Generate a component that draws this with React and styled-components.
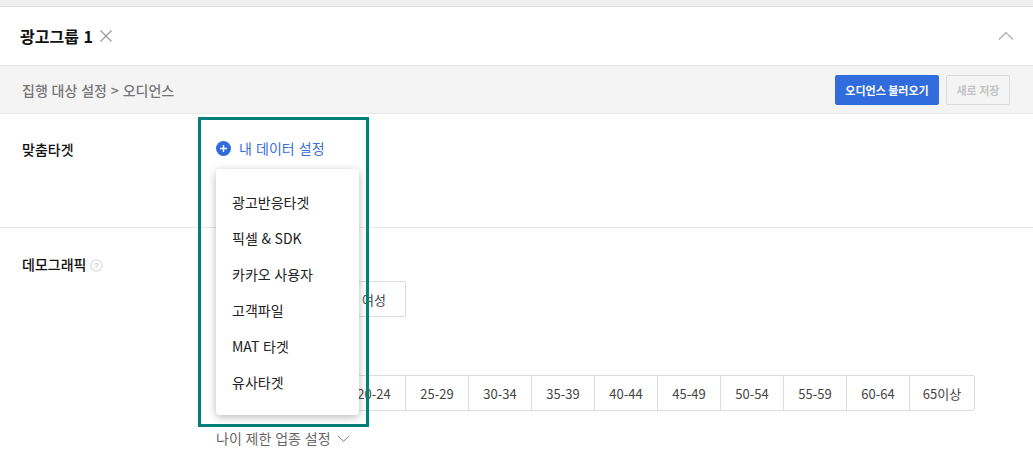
import React from "react";
import styled, { createGlobalStyle } from "styled-components";

const Global = createGlobalStyle`
  html, body { margin: 0; padding: 0; background: #fff; }
  body { font-family: "Noto Sans CJK KR", "Noto Sans", sans-serif; color: #222; }
  #root { height: 459px; overflow: hidden; }
`;

const Page = styled.div`
  position: relative;
  width: 1033px;
  height: 459px;
  overflow: hidden;
`;
const TopStrip = styled.div`
  height: 6px;
  background: #eeeeee;
  border-bottom: 1px solid #dcdcdc;
`;
const GroupHeader = styled.div`
  height: 58px;
  display: flex;
  align-items: center;
  justify-content: space-between;
  padding: 0 19px 0 20px;
  border-bottom: 1px solid #e8e8e8;
`;
const GroupTitle = styled.div`
  display: flex;
  align-items: center;
  gap: 5px;
  font-size: 16px;
  font-weight: 700;
  word-spacing: 1px;
  color: #111;
`;
const SubBar = styled.div`
  height: 47px;
  display: flex;
  align-items: center;
  justify-content: space-between;
  padding: 0 23px 0 22px;
  background: #f4f4f4;
  border-bottom: 1px solid #e8e8e8;
`;
const Crumb = styled.div`
  font-size: 14px;
  font-weight: 500;
  word-spacing: 0.7px;
  color: #777;
`;
const Actions = styled.div`
  display: flex;
  gap: 7px;
`;
const ActionButton = styled.button`
  height: 30px;
  padding: 0;
  width: ${(p) => p.$w}px;
  font: 700 11px "Noto Sans CJK KR", sans-serif;
  border-radius: 2px;
  border: 1px solid ${(p) => (p.$primary ? "#316cdd" : "#dcdcdc")};
  background: ${(p) => (p.$primary ? "#316cdd" : "#f4f4f4")};
  color: ${(p) => (p.$primary ? "#fff" : "#c4c4c4")};
`;
const Row = styled.div`
  display: flex;
  height: ${(p) => p.$h}px;
  border-bottom: ${(p) => (p.$line ? "1px solid #e8e8e8" : "none")};
`;
const RowLabel = styled.div`
  width: 194px;
  padding: ${(p) => p.$top}px 0 0 22px;
  display: flex;
  align-items: flex-start;
  gap: 4px;
  font-size: 14px;
  font-weight: 500;
  line-height: 19px;
  color: #111;
`;
const RowBody = styled.div`
  flex: 1;
  display: flex;
  flex-direction: column;
  align-items: flex-start;
`;
const AddLink = styled.div`
  margin-top: 24px;
  display: flex;
  align-items: center;
  gap: 8px;
  font-size: 14px;
  line-height: 20px;
  word-spacing: 1px;
  color: #3a6fdc;
`;
const Segments = styled.div`
  display: flex;
  height: 36px;
  margin-top: ${(p) => p.$top}px;
  box-sizing: border-box;
  border: 1px solid #dcdcdc;
  border-radius: 2px;
`;
const Segment = styled.div`
  width: 62px;
  display: flex;
  align-items: center;
  justify-content: center;
  font-size: 13px;
  color: #444;
  border-left: 1px solid #dcdcdc;
  &:first-child { border-left: none; }
  &:last-child { width: 64px; }
`;
const GenderSegments = styled(Segments)`
  ${Segment}:last-child { width: 62px; }
`;
const AgeLimit = styled.div`
  margin-top: 17px;
  display: flex;
  align-items: center;
  gap: 6px;
  font-size: 14px;
  line-height: 20px;
  word-spacing: 0.7px;
  color: #666;
`;
const Highlight = styled.div`
  position: absolute;
  left: 198px;
  top: 117px;
  width: 171px;
  height: 310px;
  box-sizing: border-box;
  border: 3px solid #008078;
  pointer-events: none;
`;
const Menu = styled.ul`
  position: absolute;
  left: 216px;
  top: 169px;
  width: 143px;
  height: 246px;
  box-sizing: border-box;
  margin: 0;
  padding: 15px 0;
  list-style: none;
  background: #fff;
  border-radius: 4px;
  box-shadow: 0 2px 8px rgba(0, 0, 0, 0.28);
`;
const MenuItem = styled.li`
  height: 36px;
  padding-left: 16px;
  display: flex;
  align-items: center;
  font-size: 14px;
  word-spacing: 0.5px;
  color: #222;
`;

const Line = ({ size, color, d, width = 1.2 }) => (
  <svg width={size} height={size} viewBox="0 0 16 16" fill="none" stroke={color} strokeWidth={width}>
    <path d={d} />
  </svg>
);

const PlusCircle = () => (
  <svg width="15" height="15" viewBox="0 0 15 15">
    <circle cx="7.5" cy="7.5" r="7.5" fill="#316cdd" />
    <path d="M7.5 4v7M4 7.5h7" stroke="#fff" strokeWidth="1.4" />
  </svg>
);

const Help = () => (
  <svg width="13" height="13" viewBox="0 0 13 13" style={{ marginTop: 4 }}>
    <circle cx="6.5" cy="6.5" r="5.6" fill="none" stroke="#dcdcdc" strokeWidth="1.2" />
    <text x="6.5" y="9.4" textAnchor="middle" fontSize="8" fontFamily="Liberation Sans" fill="#c8c8c8" fontWeight="700">?</text>
  </svg>
);

// cells behind the open menu show nothing in the picture, so they stay empty
const genders = ["", "", "여성"];
const ages = ["", "", "20-24", "25-29", "30-34", "35-39", "40-44", "45-49", "50-54", "55-59", "60-64", "65이상"];
const menuItems = ["광고반응타겟", "픽셀 & SDK", "카카오 사용자", "고객파일", "MAT 타겟", "유사타겟"];

export default function App() {
  return (
    <Page>
      <Global />
      <TopStrip />
      <GroupHeader>
        <GroupTitle>
          광고그룹 1
          <Line size={16} color="#999" d="M2.5 2.5l11 11M13.5 2.5l-11 11" />
        </GroupTitle>
        <Line size={16} color="#aaa" d="M1 11.5L8 4.5l7 7" />
      </GroupHeader>
      <SubBar>
        <Crumb>집행 대상 설정 &gt; 오디언스</Crumb>
        <Actions>
          <ActionButton $primary $w={104}>오디언스 불러오기</ActionButton>
          <ActionButton $w={64}>새로 저장</ActionButton>
        </Actions>
      </SubBar>
      <Row $h={113} $line>
        <RowLabel $top={26}>맞춤타겟</RowLabel>
        <RowBody>
          <AddLink>
            <PlusCircle />
            내 데이터 설정
          </AddLink>
        </RowBody>
      </Row>
      <Row $h={231}>
        <RowLabel $top={27}>
          데모그래픽
          <Help />
        </RowLabel>
        <RowBody>
          <GenderSegments $top={53}>
            {genders.map((g, i) => <Segment key={i}>{g}</Segment>)}
          </GenderSegments>
          <Segments $top={58}>
            {ages.map((a, i) => <Segment key={i}>{a}</Segment>)}
          </Segments>
          <AgeLimit>
            나이 제한 업종 설정
            <Line size={13} color="#777" d="M1 4.5l7 7 7-7" />
          </AgeLimit>
        </RowBody>
      </Row>
      <Menu>
        {menuItems.map((m) => <MenuItem key={m}>{m}</MenuItem>)}
      </Menu>
      <Highlight />
    </Page>
  );
}
